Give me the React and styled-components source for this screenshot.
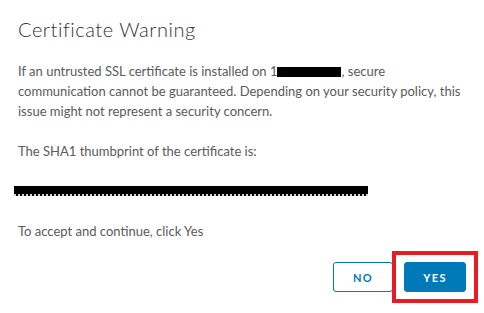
import React from "react";
import styled, { createGlobalStyle } from "styled-components";

const GlobalStyle = createGlobalStyle`
  html, body {
    margin: 0;
    padding: 0;
    background: #fff;
  }
  body {
    font-family: "Lato", "Open Sans", sans-serif;
  }
`;

const Dialog = styled.div`
  width: 484px;
  height: 313px;
  box-sizing: border-box;
  padding: 17px 18px 0 18px;
  background: #fff;
  overflow: hidden;
`;

const Title = styled.h3`
  margin: 0 0 20px 0;
  font-size: 20px;
  line-height: 24px;
  font-weight: 300;
  color: #333;
  letter-spacing: 0.55px;
`;

const Text = styled.p`
  margin: 0 0 ${(p) => (p.$gap ?? 20)}px 0;
  font-size: 13px;
  line-height: 20px;
  color: #5a5a5a;
`;

const Redacted = styled.span`
  display: inline-block;
  width: ${(p) => p.$w}px;
  height: 10px;
  background: #000;
  vertical-align: -1px;
`;

const Thumbprint = styled.div`
  margin: 25px 0 25px -4px;
  width: 354px;
  height: 8px;
  background: #000;
  border-bottom: 2px dotted #d6d6d6;
`;

const Actions = styled.div`
  display: flex;
  justify-content: flex-end;
  align-items: center;
  margin-right: -12px;
`;

const Button = styled.button`
  box-sizing: border-box;
  height: 30px;
  width: ${(p) => p.$w}px;
  border-radius: 3px;
  border: 1px solid #0079b8;
  background: ${(p) => (p.$primary ? "#0079b8" : "#fff")};
  color: ${(p) => (p.$primary ? "#fff" : "#0079b8")};
  font-family: "Lato", "Open Sans", sans-serif;
  font-size: 11px;
  font-weight: 700;
  letter-spacing: 1.4px;
  padding: 0;
  cursor: pointer;
`;

const Highlight = styled.div`
  box-sizing: border-box;
  margin-left: -1px;
  padding: 7px 8px;
  border: 4px solid #e81c24;
  display: flex;
`;

export default function App() {
  return (
    <>
      <GlobalStyle />
      <Dialog>
        <Title>Certificate Warning</Title>
        <Text>
          If an untrusted SSL certificate is installed on 1
          <Redacted $w={64} />, secure communication cannot be guaranteed.
          Depending on your security policy, this issue might not represent a
          security concern.
        </Text>
        <Text $gap={0}>The SHA1 thumbprint of the certificate is:</Text>
        <Thumbprint />
        <Text $gap={10}>To accept and continue, click Yes</Text>
        <Actions>
          <Button $w={60}>NO</Button>
          <Highlight>
            <Button $w={62} $primary>
              YES
            </Button>
          </Highlight>
        </Actions>
      </Dialog>
    </>
  );
}
